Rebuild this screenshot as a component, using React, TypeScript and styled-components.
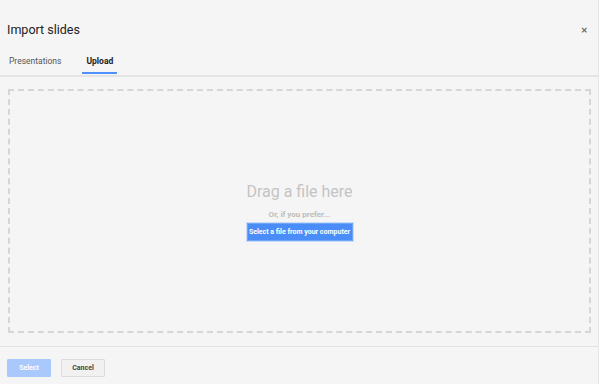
import React, { useState } from 'react';
import styled, { createGlobalStyle } from 'styled-components';

const GlobalStyle = createGlobalStyle`
  html, body {
    margin: 0;
    padding: 0;
    background: #ffffff;
    font-family: Roboto, "Liberation Sans", Arial, sans-serif;
  }
`;

const tabs = ['Presentations', 'Upload'];

const App: React.FC = () => {
  const [active, setActive] = useState('Upload');

  return (
    <>
      <GlobalStyle />
      <Dialog>
        <Header>
          <Title>Import slides</Title>
          <Close aria-label="Close">×</Close>
        </Header>
        <TabBar>
          {tabs.map((t) => (
            <Tab key={t} active={t === active} onClick={() => setActive(t)}>
              {t}
            </Tab>
          ))}
        </TabBar>
        <Body>
          <DropZone>
            <DragText>Drag a file here</DragText>
            <Prefer>Or, if you prefer...</Prefer>
            <PickButton>Select a file from your computer</PickButton>
          </DropZone>
        </Body>
        <Footer>
          <FooterButton primary disabled>
            Select
          </FooterButton>
          <FooterButton>Cancel</FooterButton>
        </Footer>
      </Dialog>
    </>
  );
};

export default App;

const Dialog = styled.div`
  width: 598px;
  height: 384px;
  display: flex;
  flex-direction: column;
  background: #f5f5f5;
  border-right: 1px solid #e6e6e6;
`;

const Header = styled.div`
  display: flex;
  align-items: center;
  justify-content: space-between;
  padding: 20px 10px 0 7px;
  height: 20px;
`;

const Title = styled.div`
  font-size: 12.5px;
  color: #222;
  line-height: 20px;
`;

const Close = styled.button`
  border: none;
  background: none;
  padding: 0;
  font-size: 9px;
  line-height: 9px;
  font-weight: bold;
  color: #666;
  cursor: pointer;
  font-family: "DejaVu Sans", sans-serif;
`;

const TabBar = styled.div`
  display: flex;
  gap: 17px;
  margin-top: 7px;
  padding-left: 9px;
  border-bottom: 2px solid #e4e4e4;
`;

const Tab = styled.div<{ active?: boolean }>`
  font-size: 8.5px;
  line-height: 12px;
  padding: 8px 4px 5px;
  color: ${({ active }) => (active ? '#222' : '#555')};
  font-weight: ${({ active }) => (active ? 700 : 400)};
  border-bottom: 2px solid ${({ active }) => (active ? '#4d90fe' : 'transparent')};
  margin-bottom: 1px;
  cursor: pointer;
  &:first-child {
    padding-left: 0;
  }
`;

const Body = styled.div`
  flex: 1;
  display: flex;
  padding: 12px 7px 13px 8px;
  border-bottom: 1px solid #e2e2e2;
`;

const DropZone = styled.div`
  flex: 1;
  display: flex;
  flex-direction: column;
  align-items: center;
  justify-content: center;
  border: 2px dashed #d6d6d6;
`;

const DragText = styled.div`
  font-size: 16px;
  color: #c4c4c4;
  line-height: 20px;
`;

const Prefer = styled.div`
  margin-top: 8px;
  font-size: 8px;
  line-height: 10px;
  font-weight: 700;
  color: #bcbcbc;
`;

const PickButton = styled.button`
  margin-top: 3px;
  height: 18px;
  width: 106px;
  padding: 0;
  background: #4a8df8;
  border: 1px solid #6fa5f8;
  box-shadow: 0 0 0 1px rgba(77, 144, 254, 0.25);
  color: #fff;
  font-family: Roboto, "Liberation Sans", Arial, sans-serif;
  font-size: 7px;
  font-weight: 700;
  cursor: pointer;
`;

const Footer = styled.div`
  display: flex;
  gap: 10px;
  padding: 12px 7px 7px;
`;

const FooterButton = styled.button<{ primary?: boolean }>`
  width: 44px;
  height: 18px;
  padding: 0;
  font-family: Roboto, "Liberation Sans", Arial, sans-serif;
  font-size: 7px;
  font-weight: 700;
  border-radius: 1px;
  border: 1px solid ${({ primary }) => (primary ? '#a9c8fb' : '#dcdcdc')};
  background: ${({ primary }) => (primary ? '#a9c8fb' : '#f1f1f1')};
  color: ${({ primary }) => (primary ? '#fff' : '#444')};
  cursor: pointer;
`;
